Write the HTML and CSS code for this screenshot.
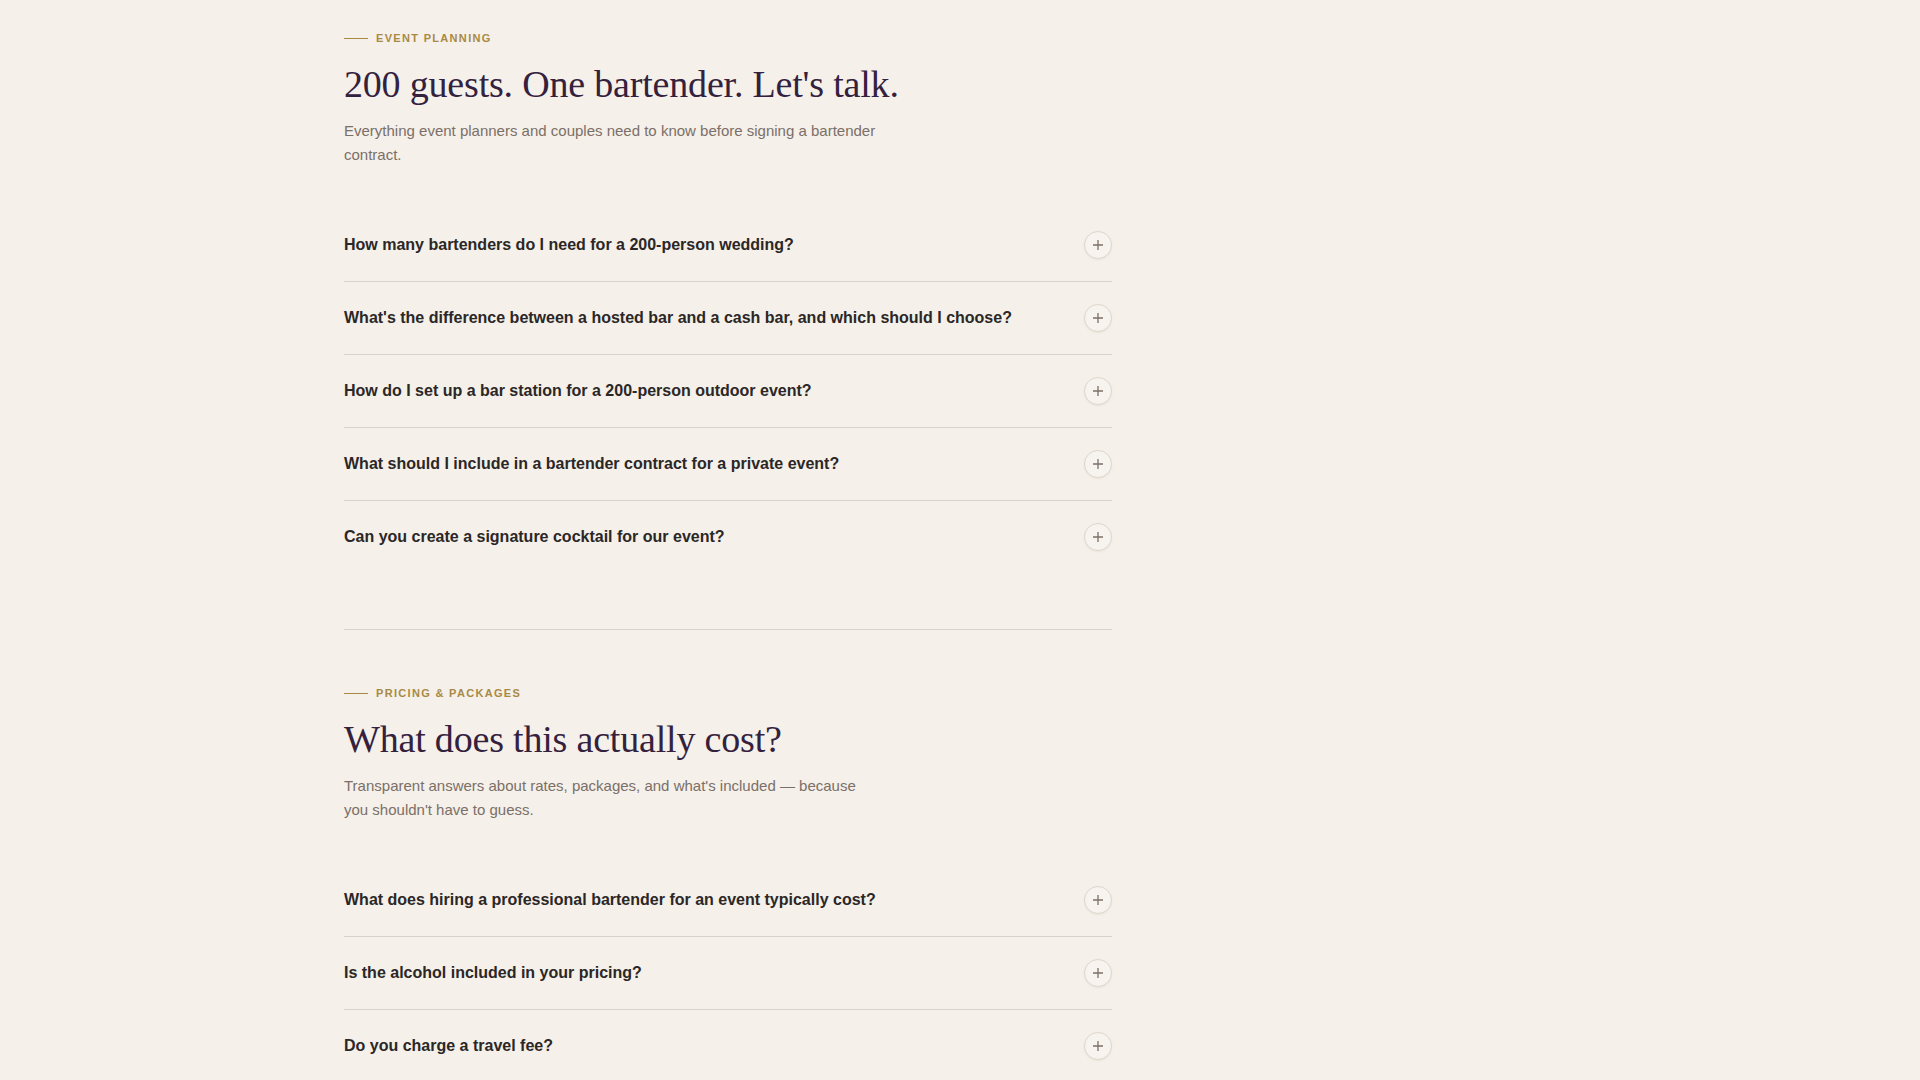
FILE: index.html
```html
<!DOCTYPE html>
<html lang="en">
<head>
<meta charset="utf-8">
<title>FAQ</title>
<link rel="stylesheet" href="styles.css">
</head>
<body>
<main class="container">
  <div class="faq-col">
    <section class="faq-section">
      <div class="eyebrow"><span class="eyebrow-line"></span>EVENT PLANNING</div>
      <h2 class="section-title">200 guests. One bartender. Let's talk.</h2>
      <p class="section-sub">Everything event planners and couples need to know before signing a bartender contract.</p>
      <div class="faq-list">
        <div class="faq-item"><span class="faq-q">How many bartenders do I need for a 200-person wedding?</span><span class="faq-icon"><svg viewBox="0 0 12 12" width="12" height="12"><path d="M6 1v10M1 6h10"/></svg></span></div>
        <div class="faq-item"><span class="faq-q">What's the difference between a hosted bar and a cash bar, and which should I choose?</span><span class="faq-icon"><svg viewBox="0 0 12 12" width="12" height="12"><path d="M6 1v10M1 6h10"/></svg></span></div>
        <div class="faq-item"><span class="faq-q">How do I set up a bar station for a 200-person outdoor event?</span><span class="faq-icon"><svg viewBox="0 0 12 12" width="12" height="12"><path d="M6 1v10M1 6h10"/></svg></span></div>
        <div class="faq-item"><span class="faq-q">What should I include in a bartender contract for a private event?</span><span class="faq-icon"><svg viewBox="0 0 12 12" width="12" height="12"><path d="M6 1v10M1 6h10"/></svg></span></div>
        <div class="faq-item"><span class="faq-q">Can you create a signature cocktail for our event?</span><span class="faq-icon"><svg viewBox="0 0 12 12" width="12" height="12"><path d="M6 1v10M1 6h10"/></svg></span></div>
      </div>
    </section>
    <section class="faq-section">
      <div class="eyebrow"><span class="eyebrow-line"></span>PRICING &amp; PACKAGES</div>
      <h2 class="section-title">What does this actually cost?</h2>
      <p class="section-sub">Transparent answers about rates, packages, and what's included — because you shouldn't have to guess.</p>
      <div class="faq-list">
        <div class="faq-item"><span class="faq-q">What does hiring a professional bartender for an event typically cost?</span><span class="faq-icon"><svg viewBox="0 0 12 12" width="12" height="12"><path d="M6 1v10M1 6h10"/></svg></span></div>
        <div class="faq-item"><span class="faq-q">Is the alcohol included in your pricing?</span><span class="faq-icon"><svg viewBox="0 0 12 12" width="12" height="12"><path d="M6 1v10M1 6h10"/></svg></span></div>
        <div class="faq-item"><span class="faq-q">Do you charge a travel fee?</span><span class="faq-icon"><svg viewBox="0 0 12 12" width="12" height="12"><path d="M6 1v10M1 6h10"/></svg></span></div>
      </div>
    </section>
  </div>
</main>
</body>
</html>
```
FILE: styles.css
```css
* { box-sizing: border-box; }
html, body {
  margin: 0;
  padding: 0;
  background: #f5f0e9;
  font-family: "Liberation Sans", Arial, sans-serif;
  color: #2b2727;
}
.container {
  max-width: 1232px;
  margin: 0 auto;
}
.faq-col {
  width: 768px;
}
.faq-section {
  padding: 55px 0 56px;
  border-bottom: 1px solid #d9d2c9;
}
.faq-section:first-child {
  padding-top: 30px;
}
.eyebrow {
  display: flex;
  align-items: center;
  gap: 8px;
  font-size: 11px;
  line-height: 16px;
  font-weight: 700;
  letter-spacing: 0.12em;
  color: #a88a45;
}
.eyebrow-line {
  display: block;
  width: 24px;
  height: 1px;
  background: #a88a45;
}
.section-title {
  margin: 16px 0 0;
  font-family: "Liberation Serif", "Times New Roman", serif;
  font-weight: 400;
  font-size: 38px;
  line-height: 1.2;
  letter-spacing: -0.005em;
  color: #33213d;
}
.section-sub {
  margin: 11px 0 41.5px;
  max-width: 536px;
  font-size: 15px;
  line-height: 24.5px;
  color: #7b6f68;
}
.faq-list {
  display: flex;
  flex-direction: column;
}
.faq-item {
  display: flex;
  align-items: center;
  justify-content: space-between;
  gap: 24px;
  padding: 22px 0;
  border-bottom: 1px solid #d9d2c9;
}
.faq-item:last-child {
  border-bottom: none;
}
.faq-q {
  font-size: 16px;
  line-height: 24px;
  font-weight: 700;
  color: #2b2727;
}
.faq-icon {
  flex: none;
  width: 28px;
  height: 28px;
  border-radius: 50%;
  border: 1px solid #ded7cd;
  background: #f7f3ee;
  box-shadow: 0 1px 2px rgba(120, 100, 80, 0.08);
  display: flex;
  align-items: center;
  justify-content: center;
}
.faq-icon svg {
  width: 12px;
  height: 12px;
  fill: none;
  stroke: #7d7068;
  stroke-width: 1.3;
}
```
